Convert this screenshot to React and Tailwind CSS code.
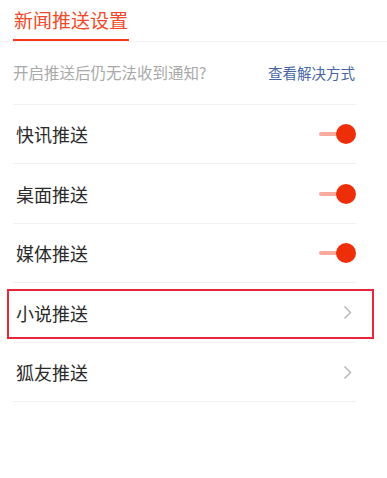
import React from "react";

const font = { fontFamily: '"Noto Sans CJK SC", "Noto Sans", sans-serif' };

function Toggle() {
  return (
    <div className="relative flex items-center w-[37px] h-[20px]">
      <div className="w-[20px] h-[4px] bg-[#f9aa9c] rounded-full" />
      <div className="absolute right-0 top-0 w-[20px] h-[20px] rounded-full bg-[#ee2e08]" />
    </div>
  );
}

function Chevron() {
  return (
    <svg width="9" height="15" viewBox="0 0 9 15" fill="none" className="mr-[4px]">
      <path d="M1.5 1.5 L7.5 7.5 L1.5 13.5" stroke="#b3b3b3" strokeWidth="1.4" />
    </svg>
  );
}

function Row({ label, right, highlight, h }) {
  return (
    <div className={`relative flex items-center justify-between border-b border-[#f1f1f1] ${h}`}>
      <span className="text-[18px] text-[#2a2a2a] pl-[3px] leading-none" style={font}>{label}</span>
      {right}
      {highlight && (
        <div className="absolute left-[-6px] right-[-18px] top-[6px] bottom-[3px] border-2 border-[#e8253a]" />
      )}
    </div>
  );
}

export default function App() {
  return (
    <div className="w-[387px] h-[478px] bg-white overflow-hidden" style={font}>
      <div className="h-[42px] border-b border-[#f3f3f3] flex items-end pl-[13px]">
        <div className="flex flex-col items-center">
          <span className="text-[19px] leading-none text-[#f0492a] px-[1px]">新闻推送设置</span>
          <div className="mt-[10px] h-[2px] w-full bg-[#f5391a]" />
        </div>
      </div>
      <div className="pl-[13px] pr-[31px]">
        <div className="flex items-center justify-between h-[63px] border-b border-[#f1f1f1]">
          <span className="text-[15.5px] text-[#a9a9a9] leading-none">开启推送后仍无法收到通知?</span>
          <span className="text-[14.5px] text-[#4766a3] leading-none mr-[1px]">查看解决方式</span>
        </div>
        <Row label="快讯推送" right={<Toggle />} h="h-[59px]" />
        <Row label="桌面推送" right={<Toggle />} h="h-[60px]" />
        <Row label="媒体推送" right={<Toggle />} h="h-[59px]" />
        <Row label="小说推送" right={<Chevron />} highlight h="h-[60px]" />
        <Row label="狐友推送" right={<Chevron />} h="h-[59px]" />
      </div>
    </div>
  );
}
